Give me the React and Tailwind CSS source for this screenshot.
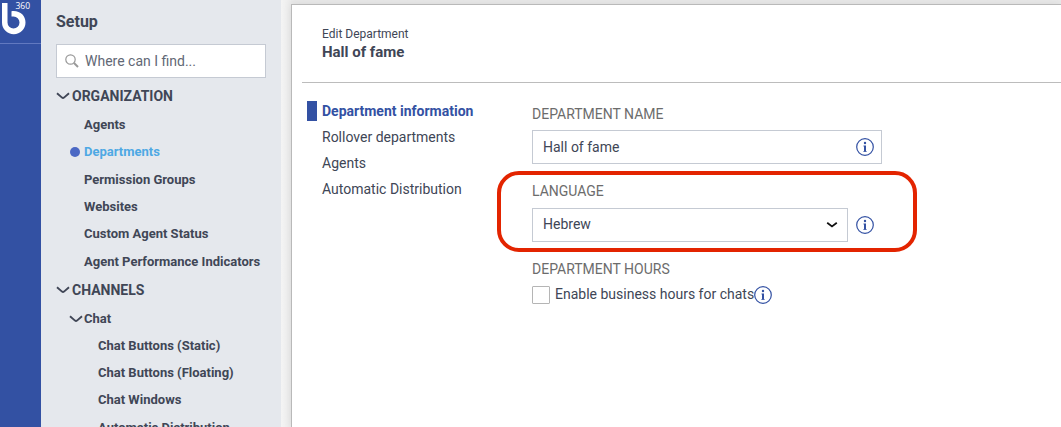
import React from "react";

const organization = [
  "Agents",
  "Departments",
  "Permission Groups",
  "Websites",
  "Custom Agent Status",
  "Agent Performance Indicators",
];
const chat = [
  "Chat Buttons (Static)",
  "Chat Buttons (Floating)",
  "Chat Windows",
  "Automatic Distribution",
];
const sections = ["Rollover departments", "Agents", "Automatic Distribution"];

function Chevron() {
  return (
    <svg className="h-[8px] w-[14px] shrink-0" viewBox="0 0 14 8" fill="none" stroke="currentColor" strokeWidth="1.900" aria-hidden="true">
      <path d="M1 1.200L6 5.600Q7 6.400 8 5.600L13 1.200" />
    </svg>
  );
}

function InfoButton() {
  return (
    <button type="button" aria-label="More information" className="h-[18px] w-[18px] shrink-0 text-[#3351a3]">
      <svg viewBox="0 0 18 18" className="h-full w-full" fill="currentColor" aria-hidden="true">
        <circle cx="9" cy="9" r="8.300" fill="none" stroke="currentColor" strokeWidth="1.200" />
        <circle cx="9" cy="5" r="1.200" />
        <path d="M8 7.500H10V13.800H8Z" />
        <path d="M7 7.500H8V8.500H7ZM7 13H11V13.900H7Z" opacity=".5" />
      </svg>
    </button>
  );
}

function Logo() {
  return (
    <a href="#home" aria-label="b 360 home" className="flex h-[44px] shrink-0 border-b border-[#6279c0]">
      <svg viewBox="0 0 41 43" className="h-[43px] w-[41px]" aria-hidden="true">
        <path d="M2 3H7.500V22.500A6 6 0 1 0 13.500 16.500H11.500V11.200C20 10.200 25.500 15.500 25.500 22.500A11.750 11.750 0 0 1 2 22.500Z" fill="#fff" />
        <text x="15.500" y="9" fill="#fff" fontSize="8.500" fontFamily="Open Sans, sans-serif">360</text>
      </svg>
    </a>
  );
}

export default function App() {
  return (
    <div className="flex h-screen overflow-hidden bg-[#e9e9e9] font-['Roboto',sans-serif] text-[#404656]">
      <div className="w-[41px] shrink-0 bg-[#3351a3]">
        <Logo />
      </div>

      <aside className="w-[240px] shrink-0 overflow-y-auto bg-[#e5e8ed] pl-[15px] pr-[15px] text-[13px] font-bold [scrollbar-width:none]">
        <h1 className="pt-[11px] text-[16px] leading-[22px]">Setup</h1>
        <label className="mt-[11px] flex h-[34px] items-center border border-[#c5cad3] bg-white pl-[8px]">
          <svg className="h-[14px] w-[14px] shrink-0" viewBox="0 0 14 14" fill="none" stroke="#999" aria-hidden="true">
            <circle cx="5.500" cy="5.500" r="4.700" strokeWidth="1.200" />
            <path d="M9 9L13 13" strokeWidth="2" />
          </svg>
          <input type="search" aria-label="Search setup" placeholder="Where can I find..." className="ml-[6px] w-full min-w-0 bg-transparent text-[14px] font-normal outline-none placeholder:text-[#626875]" />
        </label>
        <nav className="pt-[3px]">
          <button type="button" className="flex h-[30px] items-center gap-[2px] text-[14px] font-bold">
            <Chevron />ORGANIZATION
          </button>
          <ul className="grid h-[164px] auto-rows-fr pl-[14px]">
            {organization.map((item) => (
              <li key={item} className="flex items-center gap-[4px] whitespace-nowrap">
                <span className={item === "Departments" ? "h-[10px] w-[10px] rounded-full bg-[#4b68c4]" : "h-[10px] w-[10px]"} />
                <a href="#setup" className={item === "Departments" ? "text-[#4ea8e4]" : ""}>{item}</a>
              </li>
            ))}
          </ul>
          <button type="button" className="flex h-[30px] items-center gap-[2px] text-[14px] font-bold">
            <Chevron />CHANNELS
          </button>
          <button type="button" className="ml-[13px] flex h-[27px] items-center gap-[1px] font-bold">
            <Chevron />Chat
          </button>
          <ul className="grid h-[109px] auto-rows-fr pl-[42px]">
            {chat.map((item) => (
              <li key={item} className="flex items-center whitespace-nowrap">
                <a href="#chat">{item}</a>
              </li>
            ))}
          </ul>
        </nav>
      </aside>

      <div className="min-w-0 flex-1 bg-linear-to-r from-[#f4f4f4] to-[#e9e9e9] to-[12px] pl-[10px] pt-[4px]">
        <main className="h-full border-l border-t border-[#b9b9b9] bg-white pl-[10px] shadow-[0_0_8px_rgba(0,0,0,0.08)]">
          <header className="border-b border-[#bcbcbc] pb-[20px] pl-[20px] pt-[21px]">
            <p className="text-[12px] leading-[16px]">Edit Department</p>
            <h2 className="text-[15px] font-bold leading-[20px]">Hall of fame</h2>
          </header>
          <div className="flex pl-[5px]">
            <nav className="w-[225px] shrink-0 pt-[15px] text-[14px] leading-[26px]">
              <a href="#information" className="flex items-center gap-[5px] font-bold text-[#3351a3]">
                <span className="h-[20px] w-[10px] bg-[#3351a3]" />Department information
              </a>
              {sections.map((item) => (
                <a key={item} href="#section" className="block pl-[15px]">{item}</a>
              ))}
            </nav>
            <form className="w-full max-w-[350px] pt-[21px] text-[14px]">
              <div>
                <label htmlFor="name" className="block leading-[20px] text-[#6c6c6c]">DEPARTMENT NAME</label>
                <div className="mt-[6px] flex h-[34px] items-center border border-[#c5cad3] pl-[10px] pr-[7px]">
                  <input id="name" defaultValue="Hall of fame" className="h-full min-w-0 flex-1 outline-none" />
                  <InfoButton />
                </div>
              </div>
              <div className="relative mt-[17px]">
                <label htmlFor="language" className="block leading-[20px] text-[#6c6c6c]">LANGUAGE</label>
                <div className="mt-[7px] flex items-center gap-[8px]">
                  <div className="grid h-[34px] flex-1 items-center">
                    <select id="language" className="col-start-1 row-start-1 h-full w-full appearance-none border border-[#c5cad3] bg-white pb-[2px] pl-[10px] outline-none">
                      <option>Hebrew</option>
                    </select>
                    <svg className="pointer-events-none col-start-1 row-start-1 mr-[10px] h-[6px] w-[12px] justify-self-end" viewBox="0 0 12 6" fill="none" stroke="#111" strokeWidth="1.800" aria-hidden="true">
                      <path d="M1.200 .8L6 4.400L10.800 .8" />
                    </svg>
                  </div>
                  <div className="flex pr-[8px]"><InfoButton /></div>
                </div>
                <div className="pointer-events-none absolute -bottom-[10px] -left-[35px] -right-[35px] -top-[10px] rounded-[22px] border-4 border-[#e32400]" />
              </div>
              <fieldset className="mt-[17px]">
                <legend className="leading-[20px] text-[#6c6c6c]">DEPARTMENT HOURS</legend>
                <div className="mt-[5px] flex items-center">
                  <input id="hours" type="checkbox" className="mr-[5px] h-[18px] w-[18px] appearance-none rounded-[1px] border border-[#b5b5b5] bg-white checked:bg-[#3351a3]" />
                  <label htmlFor="hours">Enable business hours for chats</label>
                  <InfoButton />
                </div>
              </fieldset>
            </form>
          </div>
        </main>
      </div>
    </div>
  );
}
